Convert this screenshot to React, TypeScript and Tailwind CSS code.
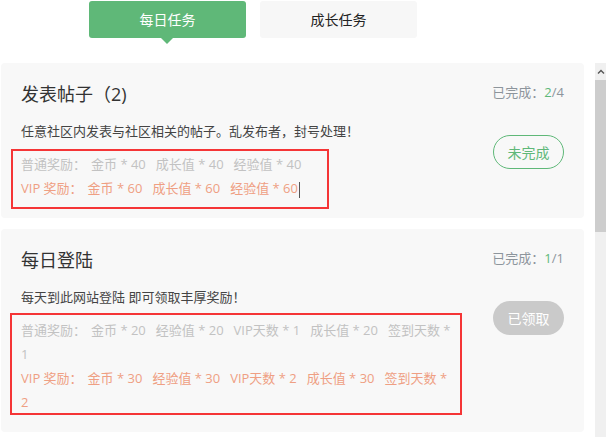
import React from "react";

type Task = {
  title: string;
  desc: string;
  done: string;
  total: string;
  normal: string[];
  vip: string[];
  status: "pending" | "claimed";
  box: { left: number; top: number; w: number; h: number };
  caret?: boolean;
};

const tasks: Task[] = [
  {
    title: "发表帖子（2)",
    desc: "任意社区内发表与社区相关的帖子。乱发布者，封号处理！",
    done: "2",
    total: "/4",
    normal: ["金币 * 40", "成长值 * 40", "经验值 * 40"],
    vip: ["金币 * 60", "成长值 * 60", "经验值 * 60"],
    status: "pending",
    box: { left: -10, top: -3, w: 318, h: 60 },
    caret: true,
  },
  {
    title: "每日登陆",
    desc: "每天到此网站登陆 即可领取丰厚奖励！",
    done: "1",
    total: "/1",
    normal: ["金币 * 20", "经验值 * 20", "VIP天数 * 1", "成长值 * 20", "签到天数 * 1"],
    vip: ["金币 * 30", "经验值 * 30", "VIP天数 * 2", "成长值 * 30", "签到天数 * 2"],
    status: "claimed",
    box: { left: -11, top: -5, w: 452, h: 102 },
  },
];

function TaskCard({ t }: { t: Task }) {
  return (
    <div className="flex w-[583px] rounded-[4px] bg-[#f8f8f8] pl-[20px] pr-[20px] pt-[20px] pb-[18px]">
      <div className="flex w-[435px] flex-col">
        <div className="-mt-[1px] mb-[1px] text-[18px] leading-[24px] text-[#333]">{t.title}</div>
        <div className="mt-[14px] text-[13px] leading-[20px] text-[#444]">{t.desc}</div>
        <div className="relative mt-[11px] text-[13px] leading-[24px]">
          <div className="text-[#c2c2c2]">
            <span className="mr-[5px]">普通奖励：</span>
            {t.normal.map((n, i) => (
              <span key={i} className="mr-[10px]">
                {n}
              </span>
            ))}
          </div>
          <div className="text-[#ef9f83]">
            <span className="mr-[5px]">VIP 奖励：</span>
            {t.vip.map((n, i) => (
              <span key={i} className={i === t.vip.length - 1 && t.caret ? "" : "mr-[10px]"}>
                {n}
              </span>
            ))}
            {t.caret && <span className="ml-[1px] inline-block h-[16px] w-px bg-[#555] align-middle" />}
          </div>
          <div
            className="pointer-events-none absolute border-2 border-[#f53536]"
            style={{ left: t.box.left, top: t.box.top, width: t.box.w, height: t.box.h }}
          />
        </div>
      </div>
      <div className="flex flex-1 flex-col items-end">
        <div className="text-[13px] leading-[18px] text-[#8d959c]">
          已完成：<span className="text-[#5fb878]">{t.done}</span>
          {t.total}
        </div>
        {t.status === "pending" ? (
          <div className="mt-[34px] flex h-[34px] w-[71px] items-center justify-center rounded-full border border-[#5fb878] text-[14px] text-[#5fb878]">
            未完成
          </div>
        ) : (
          <div className="mt-[34px] flex h-[34px] w-[71px] items-center justify-center rounded-full bg-[#cacaca] text-[14px] text-white">
            已领取
          </div>
        )}
      </div>
    </div>
  );
}

export default function App() {
  return (
    <div
      className="flex h-[437px] w-[606px] flex-col overflow-hidden bg-white"
      style={{ fontFamily: '"Open Sans", "Noto Sans CJK SC", sans-serif' }}
    >
      <div className="flex h-[63px] shrink-0 gap-[14px] pl-[89px] pt-[1px]">
        <div className="relative flex h-[37px] w-[157px] items-center justify-center rounded-[3px] bg-[#5fb878] text-[14px] text-white">
          每日任务
          <div className="absolute left-[72px] top-[37px] h-0 w-0 border-x-[6px] border-t-[6px] border-x-transparent border-t-[#5fb878]" />
        </div>
        <div className="flex h-[37px] w-[157px] items-center justify-center rounded-[3px] bg-[#f7f7f7] text-[14px] text-[#222]">
          成长任务
        </div>
      </div>
      <div className="flex flex-1 overflow-hidden">
        <div className="flex flex-1 flex-col gap-[11px] overflow-hidden pl-[1px]">
          {tasks.map((t, i) => (
            <TaskCard key={i} t={t} />
          ))}
        </div>
        <div className="flex w-[11px] shrink-0 flex-col bg-[#f0f0f0]">
          <div className="flex h-[17px] items-center justify-center">
            <svg width="8" height="5" viewBox="0 0 8 5">
              <path d="M1 4.5 L4 1.5 L7 4.5" fill="none" stroke="#555" strokeWidth="1.4" />
            </svg>
          </div>
          <div className="h-[152px] bg-[#cdcdcd]" />
        </div>
      </div>
    </div>
  );
}
